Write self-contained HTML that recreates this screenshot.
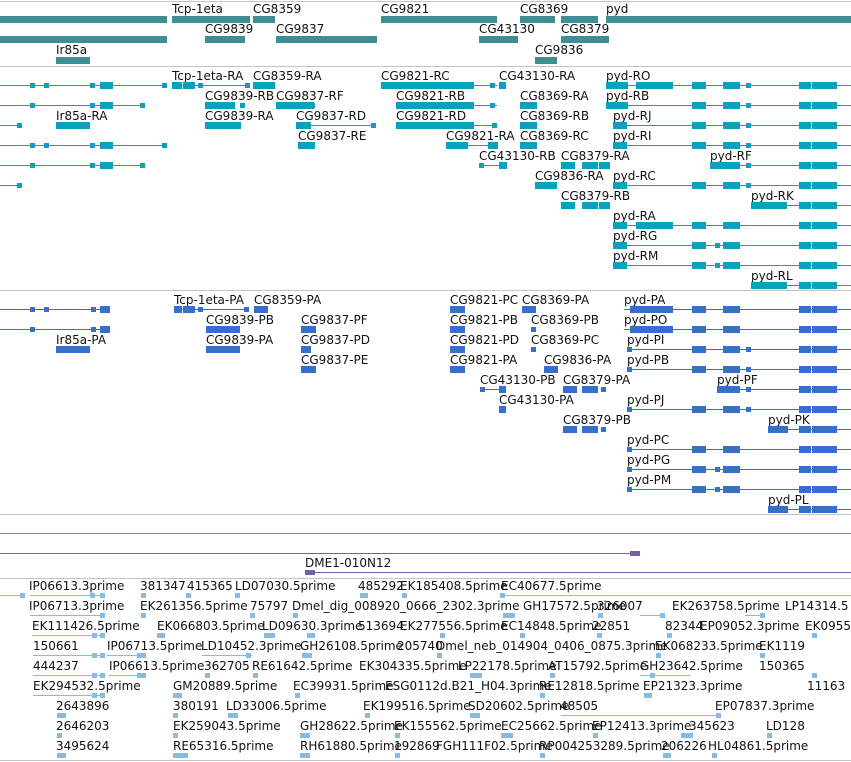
<!DOCTYPE html>
<html><head><meta charset="utf-8"><style>
body{margin:0;width:851px;height:762px;overflow:hidden;background:#fff;position:relative;font-family:"DejaVu Sans","Liberation Sans",sans-serif}
.t{position:absolute;font-size:12px;line-height:14px;white-space:nowrap;color:#111}
.r{position:absolute;left:0;width:851px;height:1px}
.l{position:absolute;top:0;height:1px;background:currentColor}
.b{position:absolute;top:-3px;height:7px;background:currentColor}
.s{position:absolute;top:-2px;height:5px;width:5px;background:currentColor}
.g{position:absolute;left:0;width:851px;height:1px;background:#c4c4c4}
.c1{color:#3f8e94}.c2{color:#0aa0bf}.c3{color:#3570cf}.c4{color:#88bbdf}.c5{color:#7660a8}
</style></head><body>
<div class="g" style="top:1px"></div>
<div class="t" style="left:172px;top:2px">Tcp-1eta</div><div class="t" style="left:253px;top:2px">CG8359</div><div class="t" style="left:381px;top:2px">CG9821</div><div class="t" style="left:520px;top:2px">CG8369</div><div class="t" style="left:606px;top:2px">pyd</div>
<div class="r c1" style="top:19px"><div class="b" style="left:0;width:167px"></div><div class="b" style="left:172px;width:78px"></div><div class="b" style="left:253px;width:22px"></div><div class="b" style="left:381px;width:116px"></div><div class="b" style="left:520px;width:35px"></div><div class="b" style="left:561px;width:37px"></div><div class="b" style="left:606px;width:245px"></div></div>
<div class="t" style="left:205px;top:22px">CG9839</div><div class="t" style="left:276px;top:22px">CG9837</div><div class="t" style="left:479px;top:22px">CG43130</div><div class="t" style="left:561px;top:22px">CG8379</div>
<div class="r c1" style="top:39px"><div class="b" style="left:0;width:167px"></div><div class="b" style="left:205px;width:40px"></div><div class="b" style="left:276px;width:101px"></div><div class="b" style="left:479px;width:39px"></div><div class="b" style="left:561px;width:48px"></div></div>
<div class="t" style="left:56px;top:43px">Ir85a</div><div class="t" style="left:535px;top:43px">CG9836</div>
<div class="r c1" style="top:60px"><div class="b" style="left:56px;width:34px"></div><div class="b" style="left:535px;width:22px"></div></div>
<div class="g" style="top:66px"></div>

<div class="t" style="left:172px;top:69px">Tcp-1eta-RA</div><div class="t" style="left:253px;top:69px">CG8359-RA</div><div class="t" style="left:381px;top:69px">CG9821-RC</div><div class="t" style="left:499px;top:69px">CG43130-RA</div><div class="t" style="left:606px;top:69px">pyd-RO</div>
<div class="r c2" style="top:85px"><div class="l" style="left:0;width:167px"></div><div class="s" style="left:30px"></div><div class="s" style="left:44px"></div><div class="s" style="left:90px"></div><div class="b" style="left:100px;width:13px"></div><div class="s" style="left:162px"></div>
<div class="l" style="left:172px;width:78px"></div><div class="b" style="left:172px;width:10px"></div><div class="b" style="left:183px;width:12px"></div><div class="s" style="left:198px"></div><div class="s" style="left:245px"></div><div class="b" style="left:253px;width:22px"></div>
<div class="l" style="left:381px;width:116px"></div><div class="b" style="left:381px;width:93px"></div><div class="s" style="left:490px"></div><div class="b" style="left:499px;width:7px"></div>
<div class="l" style="left:606px;width:245px"></div><div class="b" style="left:606px;width:22px"></div><div class="b" style="left:636px;width:37px"></div><div class="b" style="left:692px;width:14px"></div><div class="b" style="left:723px;width:17px"></div><div class="s" style="left:746px"></div><div class="b" style="left:799px;width:12px"></div><div class="b" style="left:812px;width:25px"></div></div>

<div class="t" style="left:205px;top:89px">CG9839-RB</div><div class="t" style="left:276px;top:89px">CG9837-RF</div><div class="t" style="left:396px;top:89px">CG9821-RB</div><div class="t" style="left:520px;top:89px">CG8369-RA</div><div class="t" style="left:606px;top:89px">pyd-RB</div>
<div class="r c2" style="top:105px"><div class="l" style="left:0;width:145px"></div><div class="s" style="left:30px"></div><div class="s" style="left:90px"></div><div class="b" style="left:100px;width:13px"></div><div class="s" style="left:140px"></div>
<div class="b" style="left:205px;width:30px"></div><div class="s" style="left:240px"></div><div class="b" style="left:276px;width:38px"></div><div class="s" style="left:310px"></div>
<div class="l" style="left:396px;width:101px"></div><div class="b" style="left:396px;width:78px"></div><div class="s" style="left:490px"></div><div class="b" style="left:520px;width:17px"></div>
<div class="l" style="left:606px;width:245px"></div><div class="b" style="left:606px;width:22px"></div><div class="b" style="left:692px;width:14px"></div><div class="b" style="left:723px;width:17px"></div><div class="s" style="left:746px"></div><div class="b" style="left:799px;width:12px"></div><div class="b" style="left:812px;width:25px"></div></div>

<div class="t" style="left:56px;top:109px">Ir85a-RA</div><div class="t" style="left:205px;top:109px">CG9839-RA</div><div class="t" style="left:296px;top:109px">CG9837-RD</div><div class="t" style="left:396px;top:109px">CG9821-RD</div><div class="t" style="left:520px;top:109px">CG8369-RB</div><div class="t" style="left:613px;top:109px">pyd-RJ</div>
<div class="r c2" style="top:125px"><div class="l" style="left:0;width:21px"></div><div class="s" style="left:17px"></div><div class="b" style="left:56px;width:34px"></div>
<div class="b" style="left:205px;width:36px"></div><div class="l" style="left:296px;width:80px"></div><div class="b" style="left:296px;width:15px"></div><div class="s" style="left:371px"></div>
<div class="l" style="left:396px;width:101px"></div><div class="b" style="left:396px;width:78px"></div><div class="s" style="left:492px"></div><div class="b" style="left:520px;width:17px"></div>
<div class="l" style="left:613px;width:238px"></div><div class="b" style="left:613px;width:14px"></div><div class="b" style="left:692px;width:14px"></div><div class="b" style="left:723px;width:17px"></div><div class="s" style="left:746px"></div><div class="b" style="left:799px;width:12px"></div><div class="b" style="left:812px;width:25px"></div></div>

<div class="t" style="left:298px;top:129px">CG9837-RE</div><div class="t" style="left:446px;top:129px">CG9821-RA</div><div class="t" style="left:520px;top:129px">CG8369-RC</div><div class="t" style="left:613px;top:129px">pyd-RI</div>
<div class="r c2" style="top:145px"><div class="l" style="left:0;width:167px"></div><div class="s" style="left:30px"></div><div class="s" style="left:44px"></div><div class="s" style="left:90px"></div><div class="b" style="left:100px;width:13px"></div><div class="s" style="left:162px"></div>
<div class="b" style="left:298px;width:17px"></div><div class="l" style="left:446px;width:52px"></div><div class="b" style="left:446px;width:22px"></div><div class="b" style="left:488px;width:10px"></div><div class="b" style="left:520px;width:17px"></div>
<div class="l" style="left:613px;width:238px"></div><div class="b" style="left:613px;width:14px"></div><div class="b" style="left:692px;width:14px"></div><div class="b" style="left:723px;width:17px"></div><div class="s" style="left:746px"></div><div class="b" style="left:799px;width:12px"></div><div class="b" style="left:812px;width:25px"></div></div>

<div class="t" style="left:479px;top:149px">CG43130-RB</div><div class="t" style="left:561px;top:149px">CG8379-RA</div><div class="t" style="left:710px;top:149px">pyd-RF</div>
<div class="r c2" style="top:165px"><div class="l" style="left:0;width:145px"></div><div class="s" style="left:30px"></div><div class="s" style="left:90px"></div><div class="b" style="left:100px;width:13px"></div><div class="s" style="left:140px"></div>
<div class="l" style="left:479px;width:28px"></div><div class="s" style="left:479px"></div><div class="b" style="left:499px;width:8px"></div><div class="b" style="left:561px;width:14px"></div><div class="b" style="left:582px;width:16px"></div><div class="b" style="left:599px;width:11px"></div>
<div class="l" style="left:710px;width:141px"></div><div class="b" style="left:710px;width:30px"></div><div class="s" style="left:746px"></div><div class="b" style="left:799px;width:12px"></div><div class="b" style="left:812px;width:25px"></div></div>

<div class="t" style="left:535px;top:169px">CG9836-RA</div><div class="t" style="left:613px;top:169px">pyd-RC</div>
<div class="r c2" style="top:185px"><div class="l" style="left:0;width:21px"></div><div class="s" style="left:17px"></div><div class="b" style="left:535px;width:22px"></div>
<div class="l" style="left:613px;width:238px"></div><div class="b" style="left:613px;width:14px"></div><div class="b" style="left:692px;width:14px"></div><div class="b" style="left:723px;width:17px"></div><div class="s" style="left:746px"></div><div class="b" style="left:799px;width:12px"></div><div class="b" style="left:812px;width:25px"></div></div>

<div class="t" style="left:561px;top:189px">CG8379-RB</div><div class="t" style="left:751px;top:189px">pyd-RK</div>
<div class="r c2" style="top:205px"><div class="b" style="left:561px;width:14px"></div><div class="b" style="left:582px;width:16px"></div><div class="b" style="left:599px;width:11px"></div>
<div class="l" style="left:751px;width:100px"></div><div class="b" style="left:751px;width:36px"></div><div class="b" style="left:799px;width:12px"></div><div class="b" style="left:812px;width:25px"></div></div>

<div class="t" style="left:613px;top:209px">pyd-RA</div>
<div class="r c2" style="top:225px"><div class="l" style="left:613px;width:238px"></div><div class="b" style="left:613px;width:14px"></div><div class="b" style="left:636px;width:37px"></div><div class="b" style="left:692px;width:14px"></div><div class="b" style="left:723px;width:17px"></div><div class="b" style="left:799px;width:12px"></div><div class="b" style="left:812px;width:25px"></div></div>
<div class="t" style="left:613px;top:229px">pyd-RG</div>
<div class="r c2" style="top:245px"><div class="l" style="left:613px;width:238px"></div><div class="b" style="left:613px;width:14px"></div><div class="b" style="left:692px;width:14px"></div><div class="s" style="left:715px"></div><div class="b" style="left:723px;width:17px"></div><div class="b" style="left:799px;width:12px"></div><div class="b" style="left:812px;width:25px"></div></div>
<div class="t" style="left:613px;top:249px">pyd-RM</div>
<div class="r c2" style="top:265px"><div class="l" style="left:613px;width:238px"></div><div class="b" style="left:613px;width:14px"></div><div class="b" style="left:692px;width:14px"></div><div class="s" style="left:715px"></div><div class="b" style="left:723px;width:17px"></div><div class="b" style="left:799px;width:12px"></div><div class="b" style="left:812px;width:25px"></div></div>
<div class="t" style="left:751px;top:269px">pyd-RL</div>
<div class="r c2" style="top:285px"><div class="l" style="left:751px;width:100px"></div><div class="b" style="left:751px;width:36px"></div><div class="b" style="left:799px;width:12px"></div><div class="b" style="left:812px;width:25px"></div></div>
<div class="g" style="top:290px"></div>

<div class="t" style="left:174px;top:293px">Tcp-1eta-PA</div><div class="t" style="left:254px;top:293px">CG8359-PA</div><div class="t" style="left:450px;top:293px">CG9821-PC</div><div class="t" style="left:522px;top:293px">CG8369-PA</div><div class="t" style="left:624px;top:293px">pyd-PA</div>
<div class="r c3" style="top:309px"><div class="l" style="left:0;width:110px"></div><div class="s" style="left:30px"></div><div class="s" style="left:44px"></div><div class="s" style="left:91px"></div><div class="b" style="left:100px;width:10px"></div>
<div class="l" style="left:174px;width:75px"></div><div class="b" style="left:174px;width:8px"></div><div class="b" style="left:183px;width:12px"></div><div class="s" style="left:198px"></div><div class="s" style="left:244px"></div><div class="b" style="left:254px;width:14px"></div>
<div class="b" style="left:450px;width:15px"></div><div class="b" style="left:522px;width:14px"></div>
<div class="l" style="left:624px;width:227px"></div><div class="b" style="left:630px;width:43px"></div><div class="b" style="left:692px;width:14px"></div><div class="b" style="left:723px;width:17px"></div><div class="b" style="left:799px;width:12px"></div><div class="b" style="left:812px;width:25px"></div></div>

<div class="t" style="left:206px;top:313px">CG9839-PB</div><div class="t" style="left:301px;top:313px">CG9837-PF</div><div class="t" style="left:450px;top:313px">CG9821-PB</div><div class="t" style="left:531px;top:313px">CG8369-PB</div><div class="t" style="left:624px;top:313px">pyd-PO</div>
<div class="r c3" style="top:329px"><div class="l" style="left:0;width:110px"></div><div class="s" style="left:30px"></div><div class="s" style="left:91px"></div><div class="b" style="left:100px;width:10px"></div>
<div class="b" style="left:206px;width:34px"></div><div class="b" style="left:301px;width:15px"></div><div class="b" style="left:450px;width:15px"></div><div class="s" style="left:531px"></div>
<div class="l" style="left:624px;width:227px"></div><div class="b" style="left:630px;width:43px"></div><div class="b" style="left:692px;width:14px"></div><div class="b" style="left:723px;width:17px"></div><div class="b" style="left:799px;width:12px"></div><div class="b" style="left:812px;width:25px"></div></div>

<div class="t" style="left:56px;top:333px">Ir85a-PA</div><div class="t" style="left:206px;top:333px">CG9839-PA</div><div class="t" style="left:301px;top:333px">CG9837-PD</div><div class="t" style="left:450px;top:333px">CG9821-PD</div><div class="t" style="left:531px;top:333px">CG8369-PC</div><div class="t" style="left:627px;top:333px">pyd-PI</div>
<div class="r c3" style="top:349px"><div class="b" style="left:56px;width:34px"></div><div class="b" style="left:206px;width:34px"></div><div class="b" style="left:301px;width:10px"></div><div class="b" style="left:450px;width:15px"></div><div class="s" style="left:531px"></div>
<div class="l" style="left:627px;width:224px"></div><div class="s" style="left:627px"></div><div class="b" style="left:692px;width:14px"></div><div class="b" style="left:723px;width:17px"></div><div class="s" style="left:746px"></div><div class="b" style="left:799px;width:12px"></div><div class="b" style="left:812px;width:25px"></div></div>

<div class="t" style="left:301px;top:353px">CG9837-PE</div><div class="t" style="left:450px;top:353px">CG9821-PA</div><div class="t" style="left:544px;top:353px">CG9836-PA</div><div class="t" style="left:627px;top:353px">pyd-PB</div>
<div class="r c3" style="top:369px"><div class="b" style="left:301px;width:15px"></div><div class="b" style="left:450px;width:15px"></div><div class="b" style="left:544px;width:14px"></div>
<div class="l" style="left:627px;width:224px"></div><div class="s" style="left:627px"></div><div class="b" style="left:692px;width:14px"></div><div class="b" style="left:723px;width:17px"></div><div class="s" style="left:746px"></div><div class="b" style="left:799px;width:12px"></div><div class="b" style="left:812px;width:25px"></div></div>

<div class="t" style="left:480px;top:373px">CG43130-PB</div><div class="t" style="left:563px;top:373px">CG8379-PA</div><div class="t" style="left:717px;top:373px">pyd-PF</div>
<div class="r c3" style="top:389px"><div class="l" style="left:480px;width:26px"></div><div class="s" style="left:480px"></div><div class="b" style="left:499px;width:7px"></div><div class="b" style="left:563px;width:14px"></div><div class="b" style="left:582px;width:16px"></div><div class="s" style="left:601px"></div>
<div class="l" style="left:717px;width:134px"></div><div class="b" style="left:717px;width:23px"></div><div class="s" style="left:746px"></div><div class="b" style="left:799px;width:12px"></div><div class="b" style="left:812px;width:25px"></div></div>

<div class="t" style="left:499px;top:393px">CG43130-PA</div><div class="t" style="left:627px;top:393px">pyd-PJ</div>
<div class="r c3" style="top:409px"><div class="b" style="left:499px;width:7px"></div>
<div class="l" style="left:627px;width:224px"></div><div class="s" style="left:627px"></div><div class="b" style="left:692px;width:14px"></div><div class="b" style="left:723px;width:17px"></div><div class="s" style="left:746px"></div><div class="b" style="left:799px;width:12px"></div><div class="b" style="left:812px;width:25px"></div></div>

<div class="t" style="left:563px;top:413px">CG8379-PB</div><div class="t" style="left:768px;top:413px">pyd-PK</div>
<div class="r c3" style="top:429px"><div class="b" style="left:563px;width:14px"></div><div class="b" style="left:582px;width:16px"></div><div class="s" style="left:601px"></div>
<div class="l" style="left:768px;width:83px"></div><div class="b" style="left:768px;width:20px"></div><div class="b" style="left:799px;width:12px"></div><div class="b" style="left:812px;width:25px"></div></div>

<div class="t" style="left:627px;top:433px">pyd-PC</div>
<div class="r c3" style="top:449px"><div class="l" style="left:627px;width:224px"></div><div class="s" style="left:627px"></div><div class="b" style="left:692px;width:14px"></div><div class="b" style="left:723px;width:17px"></div><div class="b" style="left:799px;width:12px"></div><div class="b" style="left:812px;width:25px"></div></div>
<div class="t" style="left:627px;top:453px">pyd-PG</div>
<div class="r c3" style="top:469px"><div class="l" style="left:627px;width:224px"></div><div class="s" style="left:627px"></div><div class="b" style="left:692px;width:14px"></div><div class="s" style="left:715px"></div><div class="b" style="left:723px;width:17px"></div><div class="b" style="left:799px;width:12px"></div><div class="b" style="left:812px;width:25px"></div></div>
<div class="t" style="left:627px;top:473px">pyd-PM</div>
<div class="r c3" style="top:489px"><div class="l" style="left:627px;width:224px"></div><div class="s" style="left:627px"></div><div class="b" style="left:692px;width:14px"></div><div class="s" style="left:715px"></div><div class="b" style="left:723px;width:17px"></div><div class="b" style="left:799px;width:12px"></div><div class="b" style="left:812px;width:25px"></div></div>
<div class="t" style="left:768px;top:493px">pyd-PL</div>
<div class="r c3" style="top:509px"><div class="l" style="left:768px;width:83px"></div><div class="b" style="left:768px;width:20px"></div><div class="b" style="left:799px;width:12px"></div><div class="b" style="left:812px;width:25px"></div></div>
<div class="g" style="top:514px"></div>

<div class="r c5" style="top:533px"><div class="l" style="left:0;width:851px;opacity:.8"></div></div>
<div class="r c5" style="top:553px"><div class="l" style="left:0;width:640px"></div><div class="b" style="left:630px;width:10px;top:-2px;height:5px"></div></div>
<div class="t" style="left:305px;top:556px">DME1-010N12</div>
<div class="r c5" style="top:572px"><div class="l" style="left:305px;width:546px"></div><div class="b" style="left:305px;width:10px;top:-2px;height:5px"></div></div>
<div class="g" style="top:578px"></div>

<div class="t" style="left:29px;top:579px">IP06613.3prime</div><div class="t" style="left:140px;top:579px">381347</div><div class="t" style="left:187px;top:579px">415365</div><div class="t" style="left:235px;top:579px">LD07030.5prime</div><div class="t" style="left:358px;top:579px">485292</div><div class="t" style="left:400px;top:579px">EK185408.5prime</div><div class="t" style="left:501px;top:579px">EC40677.5prime</div>
<div class="r c4" style="top:595px"><div class="l" style="left:0;width:25px"></div><div class="s" style="left:20px"></div><div class="l" style="left:30px;width:75px"></div><div class="s" style="left:90px"></div><div class="s" style="left:100px"></div><div class="s" style="left:141px"></div><div class="s" style="left:186px"></div><div class="s" style="left:235px"></div><div class="b" style="left:360px;width:8px;top:-2px;height:5px"></div><div class="s" style="left:402px"></div><div class="l" style="left:500px;width:351px"></div><div class="s" style="left:500px"></div></div>
<div class="t" style="left:29px;top:599px">IP06713.3prime</div><div class="t" style="left:140px;top:599px">EK261356.5prime</div><div class="t" style="left:250px;top:599px">75797</div><div class="t" style="left:292px;top:599px">Dmel_dig_008920_0666_2302.3prime</div><div class="t" style="left:523px;top:599px">GH17572.5prime</div><div class="t" style="left:597px;top:599px">326007</div><div class="t" style="left:672px;top:599px">EK263758.5prime</div><div class="t" style="left:785px;top:599px">LP14314.5</div>
<div class="r c4" style="top:615px"><div class="l" style="left:30px;width:75px"></div><div class="s" style="left:100px"></div><div class="s" style="left:141px"></div><div class="s" style="left:250px"></div><div class="s" style="left:293px"></div><div class="b" style="left:503px;width:12px;top:-2px;height:5px"></div><div class="s" style="left:598px"></div><div class="l" style="left:640px;width:25px"></div><div class="s" style="left:660px"></div><div class="l" style="left:745px;width:20px"></div><div class="s" style="left:760px"></div></div>
<div class="t" style="left:32px;top:619px">EK111426.5prime</div><div class="t" style="left:157px;top:619px">EK066803.5prime</div><div class="t" style="left:262px;top:619px">LD09630.3prime</div><div class="t" style="left:358px;top:619px">513694</div><div class="t" style="left:400px;top:619px">EK277556.5prime</div><div class="t" style="left:501px;top:619px">EC14848.5prime</div><div class="t" style="left:592px;top:619px">22851</div><div class="t" style="left:665px;top:619px">82344</div><div class="t" style="left:700px;top:619px">EP09052.3prime</div><div class="t" style="left:805px;top:619px">EK0955</div>
<div class="r c4" style="top:635px"><div class="l" style="left:32px;width:73px"></div><div class="s" style="left:92px"></div><div class="s" style="left:100px"></div><div class="b" style="left:157px;width:8px;top:-2px;height:5px"></div><div class="b" style="left:264px;width:11px;top:-2px;height:5px"></div><div class="b" style="left:307px;width:8px;top:-2px;height:5px"></div><div class="s" style="left:440px"></div><div class="s" style="left:520px"></div><div class="s" style="left:597px"></div><div class="s" style="left:667px"></div><div class="s" style="left:812px"></div></div>
<div class="t" style="left:33px;top:639px">150661</div><div class="t" style="left:107px;top:639px">IP06713.5prime</div><div class="t" style="left:201px;top:639px">LD10452.3prime</div><div class="t" style="left:300px;top:639px">GH26108.5prime</div><div class="t" style="left:397px;top:639px">205740</div><div class="t" style="left:436px;top:639px">Dmel_neb_014904_0406_0875.3prime</div><div class="t" style="left:655px;top:639px">EK068233.5prime</div><div class="t" style="left:759px;top:639px">EK1119</div>
<div class="r c4" style="top:655px"><div class="l" style="left:33px;width:72px"></div><div class="s" style="left:92px"></div><div class="s" style="left:100px"></div><div class="l" style="left:107px;width:38px"></div><div class="b" style="left:137px;width:9px;top:-2px;height:5px"></div><div class="l" style="left:202px;width:50px"></div><div class="s" style="left:246px"></div><div class="b" style="left:302px;width:10px;top:-2px;height:5px"></div><div class="s" style="left:437px"></div><div class="s" style="left:656px"></div><div class="s" style="left:760px"></div></div>
<div class="t" style="left:33px;top:659px">444237</div><div class="t" style="left:109px;top:659px">IP06613.5prime</div><div class="t" style="left:204px;top:659px">362705</div><div class="t" style="left:252px;top:659px">RE61642.5prime</div><div class="t" style="left:359px;top:659px">EK304335.5prime</div><div class="t" style="left:458px;top:659px">LP22178.5prime</div><div class="t" style="left:548px;top:659px">AT15792.5prime</div><div class="t" style="left:640px;top:659px">GH23642.5prime</div><div class="t" style="left:759px;top:659px">150365</div>
<div class="r c4" style="top:675px"><div class="l" style="left:33px;width:72px"></div><div class="s" style="left:92px"></div><div class="s" style="left:100px"></div><div class="l" style="left:109px;width:36px"></div><div class="b" style="left:137px;width:9px;top:-2px;height:5px"></div><div class="s" style="left:205px"></div><div class="s" style="left:253px"></div><div class="b" style="left:470px;width:12px;top:-2px;height:5px"></div><div class="s" style="left:550px"></div><div class="l" style="left:640px;width:50px"></div><div class="s" style="left:650px"></div><div class="s" style="left:812px"></div></div>
<div class="t" style="left:33px;top:679px">EK294532.5prime</div><div class="t" style="left:173px;top:679px">GM20889.5prime</div><div class="t" style="left:293px;top:679px">EC39931.5prime</div><div class="t" style="left:385px;top:679px">ESG0112d.B21_H04.3prime</div><div class="t" style="left:539px;top:679px">RE12818.5prime</div><div class="t" style="left:643px;top:679px">EP21323.3prime</div><div class="t" style="left:807px;top:679px">11163</div>
<div class="r c4" style="top:695px"><div class="l" style="left:33px;width:72px"></div><div class="s" style="left:92px"></div><div class="s" style="left:100px"></div><div class="b" style="left:173px;width:9px;top:-2px;height:5px"></div><div class="s" style="left:295px"></div><div class="s" style="left:540px"></div><div class="b" style="left:644px;width:8px;top:-2px;height:5px"></div></div>
<div class="t" style="left:56px;top:699px">2643896</div><div class="t" style="left:173px;top:699px">380191</div><div class="t" style="left:226px;top:699px">LD33006.5prime</div><div class="t" style="left:363px;top:699px">EK199516.5prime</div><div class="t" style="left:468px;top:699px">SD20602.5prime</div><div class="t" style="left:560px;top:699px">48505</div><div class="t" style="left:715px;top:699px">EP07837.3prime</div>
<div class="r c4" style="top:715px"><div class="b" style="left:57px;width:9px;top:-2px;height:5px"></div><div class="s" style="left:173px"></div><div class="b" style="left:228px;width:10px;top:-2px;height:5px"></div><div class="s" style="left:365px"></div><div class="b" style="left:470px;width:10px;top:-2px;height:5px"></div><div class="l" style="left:561px;width:160px"></div><div class="s" style="left:716px"></div></div>
<div class="t" style="left:56px;top:719px">2646203</div><div class="t" style="left:173px;top:719px">EK259043.5prime</div><div class="t" style="left:300px;top:719px">GH28622.5prime</div><div class="t" style="left:394px;top:719px">EK155562.5prime</div><div class="t" style="left:501px;top:719px">EC25662.5prime</div><div class="t" style="left:592px;top:719px">EP12413.3prime</div><div class="t" style="left:689px;top:719px">345623</div><div class="t" style="left:766px;top:719px">LD128</div>
<div class="r c4" style="top:735px"><div class="s" style="left:57px"></div><div class="s" style="left:173px"></div><div class="b" style="left:300px;width:10px;top:-2px;height:5px"></div><div class="s" style="left:395px"></div><div class="b" style="left:501px;width:12px;top:-2px;height:5px"></div><div class="s" style="left:593px"></div><div class="b" style="left:681px;width:12px;top:-2px;height:5px"></div><div class="s" style="left:767px"></div></div>
<div class="t" style="left:56px;top:739px">3495624</div><div class="t" style="left:173px;top:739px">RE65316.5prime</div><div class="t" style="left:300px;top:739px">RH61880.5prime</div><div class="t" style="left:394px;top:739px">192869</div><div class="t" style="left:436px;top:739px">FGH111F02.5prime</div><div class="t" style="left:539px;top:739px">RP004253289.5prime</div><div class="t" style="left:661px;top:739px">206226</div><div class="t" style="left:708px;top:739px">HL04861.5prime</div>
<div class="r c4" style="top:755px"><div class="b" style="left:57px;width:9px;top:-2px;height:5px"></div><div class="b" style="left:173px;width:15px;top:-2px;height:5px"></div><div class="b" style="left:300px;width:10px;top:-2px;height:5px"></div><div class="s" style="left:395px"></div><div class="s" style="left:540px"></div><div class="b" style="left:663px;width:8px;top:-2px;height:5px"></div><div class="s" style="left:712px"></div></div>
<div class="g" style="top:760px"></div>
</body></html>
